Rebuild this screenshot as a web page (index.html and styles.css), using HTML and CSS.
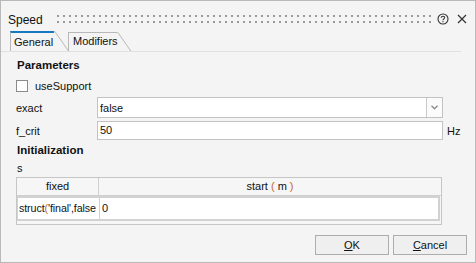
FILE: index.html
```html
<!DOCTYPE html>
<html>
<head>
<meta charset="utf-8">
<link rel="stylesheet" href="styles.css">
</head>
<body>
<div class="window">
  <div class="titlebar">
    <span class="title">Speed</span>
    <div class="grip"></div>
    <svg class="help" width="12" height="12" viewBox="0 0 12 12">
      <circle cx="6" cy="6" r="5" fill="none" stroke="#333" stroke-width="1.1"/>
      <path d="M4.3 4.8 Q4.3 3.2 6 3.2 Q7.7 3.2 7.7 4.6 Q7.7 5.5 6.7 5.9 Q6 6.2 6 7.2" fill="none" stroke="#333" stroke-width="1.1"/>
      <rect x="5.45" y="8.1" width="1.1" height="1.1" fill="#333"/>
    </svg>
    <svg class="close" width="10" height="10" viewBox="0 0 10 10">
      <path d="M1 1 L9 9 M9 1 L1 9" stroke="#333" stroke-width="1.2"/>
    </svg>
  </div>
  <div class="tabs">
    <div class="tab active">General</div>
    <div class="tab">Modifiers</div>
  </div>
  <div class="pane">
    <div class="section">Parameters</div>
    <div class="check-row">
      <span class="checkbox"></span>
      <span>useSupport</span>
    </div>
    <div class="field-row combo-row">
      <span class="label">exact</span>
      <div class="combo">
        <span class="combo-text">false</span>
        <span class="combo-btn">
          <svg width="7" height="5" viewBox="0 0 7 5"><path d="M0.5 0.8 L3.5 3.8 L6.5 0.8" fill="none" stroke="#8a8a8a" stroke-width="1.3"/></svg>
        </span>
      </div>
    </div>
    <div class="field-row input-row">
      <span class="label">f_crit</span>
      <div class="input">50</div>
      <span class="unit">Hz</span>
    </div>
    <div class="section sec2">Initialization</div>
    <div class="var">s</div>
    <div class="table">
      <div class="thead">
        <div class="th c1">fixed</div>
        <div class="th c2">start <span class="paren">(</span> m <span class="paren">)</span></div>
      </div>
      <div class="trow">
        <div class="td c1">struct<span class="paren">(</span>'final',false</div>
        <div class="td c2">0</div>
      </div>
    </div>
    <div class="buttons">
      <button class="btn"><u>O</u>K</button>
      <button class="btn"><u>C</u>ancel</button>
    </div>
  </div>
</div>
</body>
</html>
```
FILE: styles.css
```css
html, body {
  margin: 0;
  padding: 0;
}
body {
  width: 476px;
  height: 263px;
  font-family: "Liberation Sans", Arial, sans-serif;
  font-size: 11px;
  color: #111;
  background: #f3f3f3;
}
.window {
  width: 476px;
  height: 263px;
  box-sizing: border-box;
  border: 1px solid #b9b9b9;
  background: #f4f4f4;
  overflow: hidden;
}
.titlebar {
  height: 30px;
  display: flex;
  align-items: flex-start;
}
.title {
  font-size: 12px;
  margin-left: 7px;
  margin-top: 12px;
  line-height: 14px;
}
.grip {
  width: 376px;
  height: 8px;
  margin-left: 14px;
  margin-top: 14px;
  background-image:
    linear-gradient(to bottom, transparent 2px, #f4f4f4 2px),
    linear-gradient(90deg, #9b9b9b 2px, transparent 2px);
  background-size: 6px 6px, 6px 6px;
}
.help {
  margin-left: 4px;
  margin-top: 12px;
}
.close {
  margin-left: 8px;
  margin-top: 13px;
}
.tabs {
  display: flex;
  align-items: flex-end;
  height: 20px;
  padding-left: 9px;
}
.tab {
  position: relative;
  box-sizing: border-box;
  height: 19px;
  border-left: 1px solid #b8b8b8;
  border-top: 1px solid #b8b8b8;
  padding-left: 4px;
  line-height: 17px;
  margin-right: 14px;
  width: 49px;
  white-space: nowrap;
}
.tab::after {
  content: "";
  position: absolute;
  left: 100%;
  top: -1px;
  height: 19px;
  border-left: 1px solid #b8b8b8;
  transform: skewX(35deg);
  transform-origin: 0 0;
}
.tab.active {
  height: 20px;
  width: 44px;
  border-top: 2px solid #1878c0;
  line-height: 18px;
  padding-left: 3px;
}
.tab.active::after {
  top: -2px;
  height: 20px;
}
.pane {
  border-top: 1px solid #e0e0e0;
  margin-right: 14px;
  padding-left: 15px;
}
.section {
  font-weight: bold;
  font-size: 11.5px;
  line-height: 14px;
  margin-top: 6px;
  margin-left: 1px;
}
.check-row {
  display: flex;
  align-items: center;
  height: 12px;
  margin-top: 8px;
}
.checkbox {
  box-sizing: border-box;
  width: 12px;
  height: 12px;
  border: 1px solid #8a8a8a;
  background: #fff;
  margin-right: 7px;
}
.field-row {
  display: flex;
  align-items: center;
}
.label {
  width: 81px;
}
.combo-row {
  margin-top: 5px;
}
.combo {
  box-sizing: border-box;
  width: 346px;
  height: 21px;
  border: 1px solid #c2c2c2;
  background: #fff;
  display: flex;
  align-items: center;
}
.combo-text {
  flex: 1;
  padding-left: 2px;
}
.combo-btn {
  box-sizing: border-box;
  width: 16px;
  height: 19px;
  border-left: 1px solid #c8c8c8;
  background: #fbfbfb;
  display: flex;
  align-items: center;
  justify-content: center;
}
.input-row {
  margin-top: 3px;
}
.input {
  box-sizing: border-box;
  width: 346px;
  height: 19px;
  border: 1px solid #c2c2c2;
  background: #fff;
  padding-left: 2px;
  line-height: 17px;
}
.unit {
  margin-left: 4px;
}
.sec2 {
  margin-top: 3px;
}
.var {
  line-height: 14px;
  margin-top: 4px;
  margin-left: 1px;
}
.table {
  box-sizing: border-box;
  width: 426px;
  height: 48px;
  margin-top: 2px;
  border: 1px solid #c6c6c6;
  background: #f6f6f6;
}
.thead {
  display: flex;
  height: 17px;
  border-bottom: 1px solid #d0d0d0;
}
.th {
  text-align: center;
  line-height: 17px;
}
.c1 {
  box-sizing: border-box;
  width: 82px;
  border-right: 1px solid #d0d0d0;
  overflow: hidden;
  white-space: nowrap;
}
.c2 {
  flex: 1;
}
.trow {
  display: flex;
  height: 25px;
  box-sizing: border-box;
  width: 423px;
  border: 2px solid #d2d2d2;
  border-left-width: 1px;
  background: #fff;
}
.td {
  line-height: 21px;
  padding-left: 1px;
}
.td.c1 {
  font-size: 10.7px;
  letter-spacing: -0.1px;
}
.td.c2 {
  padding-left: 2px;
}
.paren {
  color: #c8641e;
}
.buttons {
  display: flex;
  justify-content: flex-end;
  gap: 4px;
  margin-top: 10px;
  margin-right: -6px;
}
.btn {
  box-sizing: border-box;
  width: 74px;
  height: 20px;
  border: 1px solid #adadad;
  background: #efefef;
  font-family: "Liberation Sans", Arial, sans-serif;
  font-size: 11px;
  color: #111;
  padding: 0;
}
```
